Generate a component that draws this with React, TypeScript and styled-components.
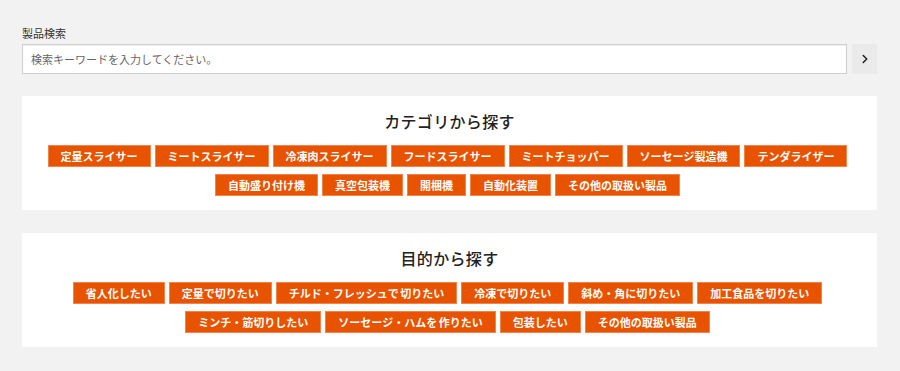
import * as React from "react";
import styled, { createGlobalStyle } from "styled-components";
import { ChevronRight } from "lucide-react";

const GlobalStyle = createGlobalStyle`
  html, body {
    margin: 0;
    padding: 0;
    background: #f2f2f2;
  }
  body {
    font-family: "Noto Sans CJK JP", "Noto Sans", sans-serif;
    color: #333;
  }
`;

const Page = styled.div`
  padding: 25px 23px 0 22px;
`;

const SearchLabel = styled.div`
  font-size: 11px;
  line-height: 16px;
  color: #333;
  margin-bottom: 3px;
`;

const SearchRow = styled.div`
  display: flex;
  gap: 5px;
  margin-bottom: 22px;
`;

const SearchInput = styled.input`
  flex: 1;
  height: 30px;
  box-sizing: border-box;
  border: 1px solid #cfcfcf;
  box-shadow: inset 0 1px 1px rgba(0, 0, 0, 0.06);
  background: #fff;
  padding: 0 8px;
  font-family: inherit;
  font-size: 11px;
  color: #333;
  outline: none;

  &::placeholder {
    color: #666;
  }
`;

const SearchButton = styled.button`
  width: 25px;
  height: 30px;
  border: none;
  background: #eaeaea;
  display: flex;
  align-items: center;
  justify-content: center;
  padding: 0;
  color: #222;
  cursor: pointer;
`;

const Card = styled.section`
  background: #fff;
  padding: 13px 10px 14px;

  & + & {
    margin-top: 23px;
  }
`;

const CardTitle = styled.h2`
  margin: 0 0 12px;
  text-align: center;
  font-size: 16px;
  line-height: 24px;
  font-weight: 500;
  color: #222;
  letter-spacing: 0.02em;
`;

const TagList = styled.div`
  display: flex;
  flex-wrap: wrap;
  justify-content: center;
  row-gap: 7px;
`;

const Tag = styled.a`
  display: block;
  margin-right: 4px;
  padding: 0 12px;
  height: 22px;
  box-sizing: border-box;
  line-height: 20px;
  border: 1px solid #f3834a;
  background: #e85300;
  color: #fff;
  font-size: 11px;
  font-weight: 700;
  white-space: nowrap;
  word-spacing: -1px;
  text-decoration: none;
`;

const categories = [
  "定量スライサー",
  "ミートスライサー",
  "冷凍肉スライサー",
  "フードスライサー",
  "ミートチョッパー",
  "ソーセージ製造機",
  "テンダライザー",
  "自動盛り付け機",
  "真空包装機",
  "開梱機",
  "自動化装置",
  "その他の取扱い製品",
];

const purposes = [
  "省人化したい",
  "定量で切りたい",
  "チルド・フレッシュで 切りたい",
  "冷凍で切りたい",
  "斜め・角に切りたい",
  "加工食品を切りたい",
  "ミンチ・筋切りしたい",
  "ソーセージ・ハムを 作りたい",
  "包装したい",
  "その他の取扱い製品",
];

const App: React.FC = () => (
  <Page>
    <GlobalStyle />
    <SearchLabel>製品検索</SearchLabel>
    <SearchRow>
      <SearchInput placeholder="検索キーワードを入力してください。" />
      <SearchButton aria-label="検索">
        <ChevronRight size={14} strokeWidth={2.6} />
      </SearchButton>
    </SearchRow>

    <Card>
      <CardTitle>カテゴリから探す</CardTitle>
      <TagList>
        {categories.map((c) => (
          <Tag key={c} href="#">
            {c}
          </Tag>
        ))}
      </TagList>
    </Card>

    <Card>
      <CardTitle>目的から探す</CardTitle>
      <TagList>
        {purposes.map((p) => (
          <Tag key={p} href="#">
            {p}
          </Tag>
        ))}
      </TagList>
    </Card>
  </Page>
);

export default App;
